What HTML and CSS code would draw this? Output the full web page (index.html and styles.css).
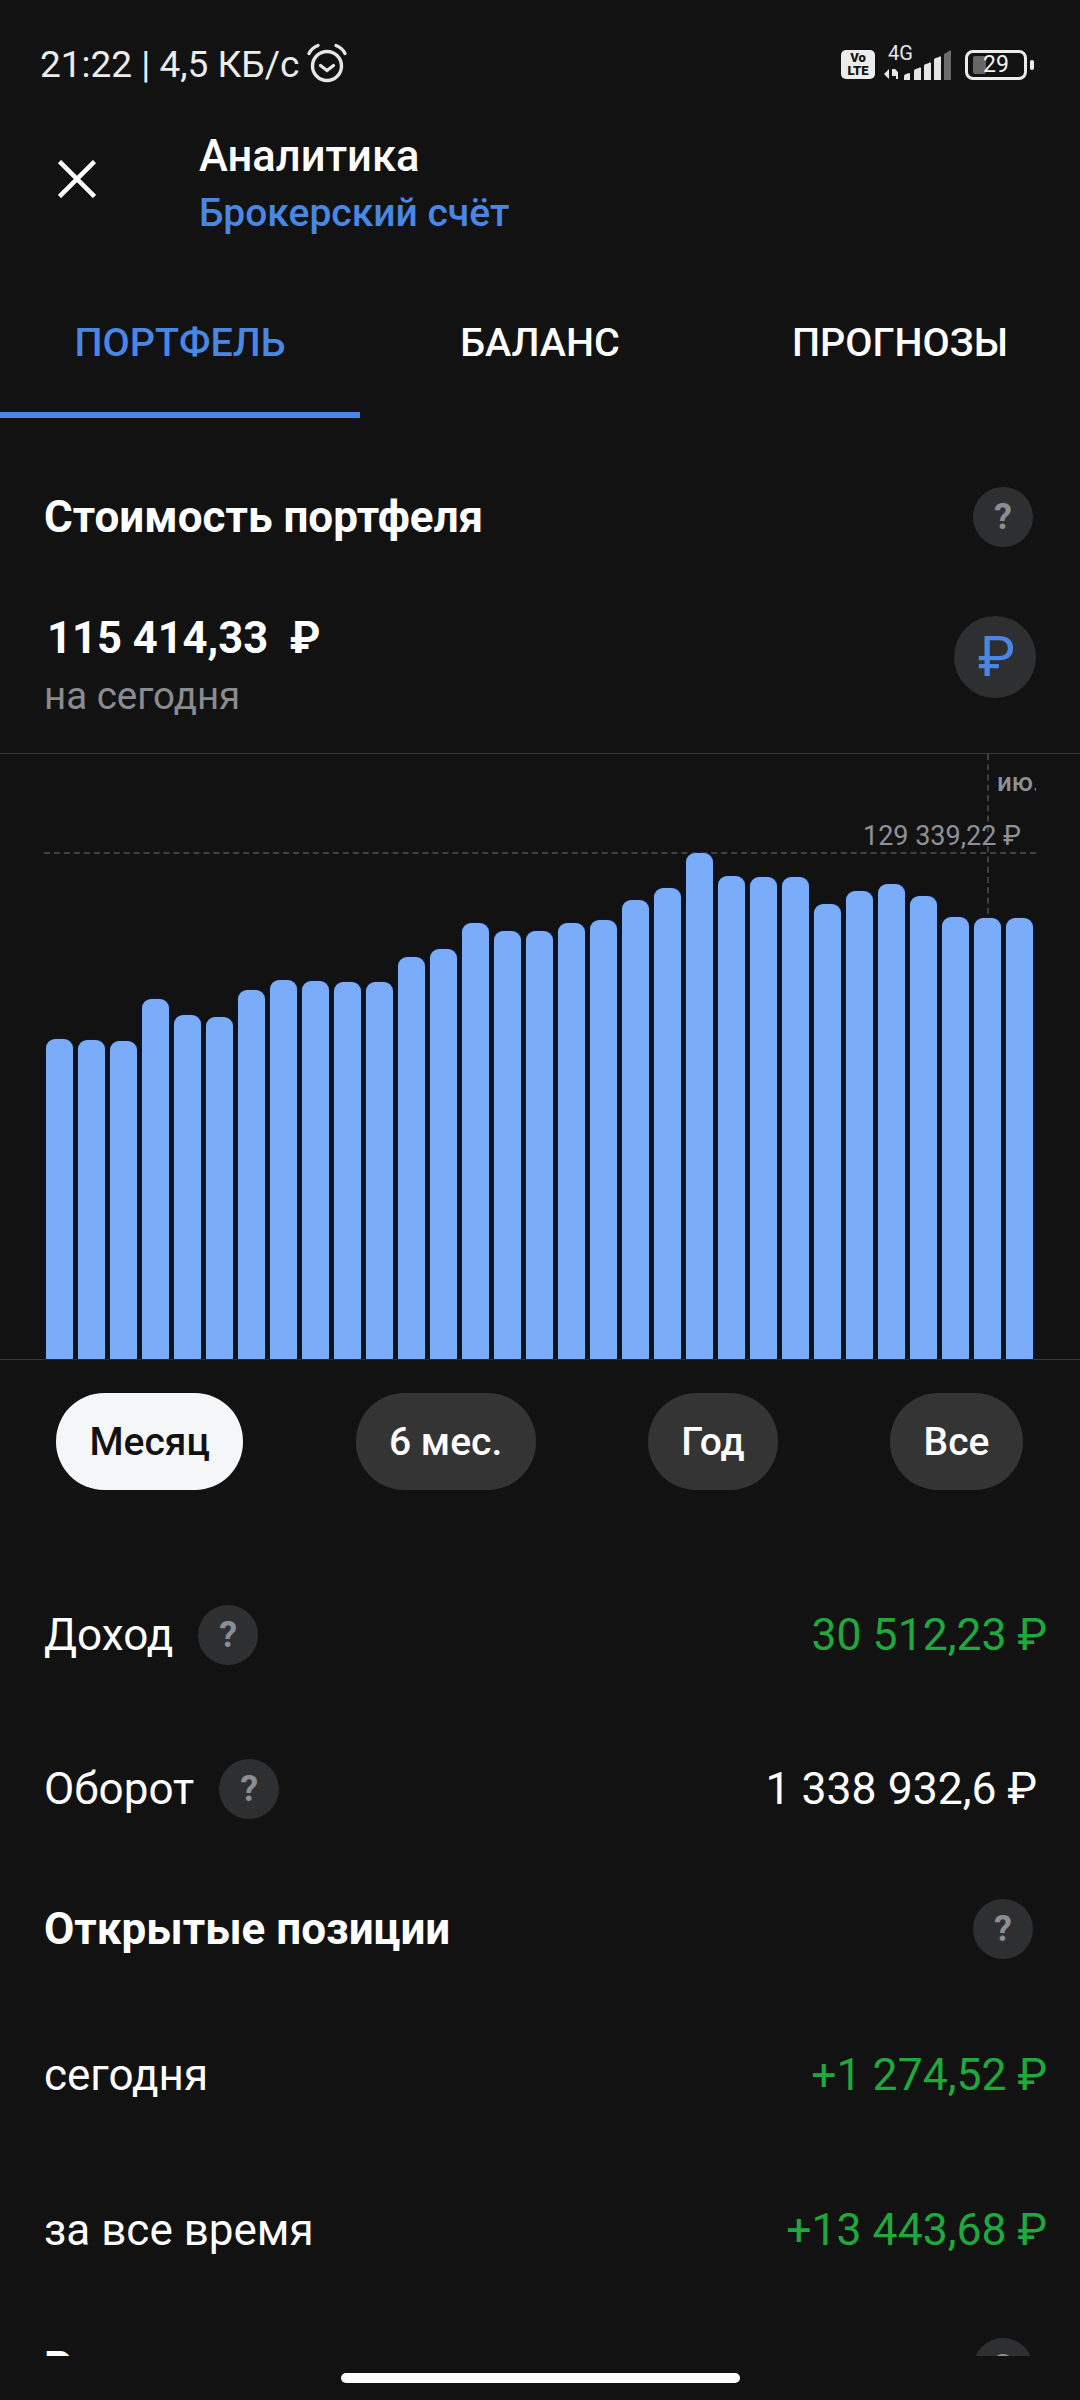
FILE: index.html
```html
<!DOCTYPE html>
<html lang="ru">
<head>
<meta charset="utf-8">
<title>Аналитика</title>
<link rel="stylesheet" href="styles.css">
</head>
<body>
<div class="screen">
  <div class="content">
    <div class="status">
      <div class="status-left">
        <span>21:22 | 4,5 КБ/с</span>
        <svg class="alarm" width="44" height="42" viewBox="0 0 44 42" fill="none" stroke="#e6e6e6" stroke-linecap="round">
          <circle cx="21" cy="23" r="14.5" stroke-width="3.4"/>
          <path d="M14.5 22.5l6.5 5 6.5-5" stroke-width="3.2"/>
          <path d="M3 10.5C5 6.5 8 4 12 2.500M39 10.500C37 6.500 34 4 30 2.500" stroke-width="3.4"/>
        </svg>
      </div>
      <div class="status-right">
        <div class="volte"><span>Vo</span><span>LTE</span></div>
        <div class="signal">
          <span class="net">4G</span>
          <svg width="68" height="30" viewBox="0 0 68 30">
            <path d="M0 24l5-5v10zM8 19h3l3 3v7h-2v-3H8z" fill="#e6e6e6"/>
            <path d="M20 26a3 3 0 0 1 2-2l3-1a1 1 0 0 1 1 1v6h-6zM30 21a2 2 0 0 1 2-2l3-1a1 1 0 0 1 2 1v11h-7zM40 16a2 2 0 0 1 2-2l3-1a1 1 0 0 1 2 1v16h-7zM50 10a2 2 0 0 1 2-2l3-1a1 1 0 0 1 2 1v22h-7z" fill="#e6e6e6"/>
            <path d="M60 5a2 2 0 0 1 2-2l3-2a1 1 0 0 1 2 1v28h-7z" fill="#6d6d6d"/>
          </svg>
        </div>
        <div class="battery"><i class="battery-fill"></i><span class="battery-num">29</span></div>
        <i class="battery-nub"></i>
      </div>
    </div>

    <header class="head">
      <svg class="close" width="38" height="38" viewBox="0 0 38 38" fill="none" stroke="#fff" stroke-width="4.500">
        <path d="M1.500 1.500l35 35M36.500 1.500l-35 35"/>
      </svg>
      <div class="titles">
        <div class="title">Аналитика</div>
        <div class="subtitle">Брокерский счёт</div>
      </div>
    </header>

    <nav class="tabs">
      <div class="tab tab-active">ПОРТФЕЛЬ</div>
      <div class="tab">БАЛАНС</div>
      <div class="tab">ПРОГНОЗЫ</div>
    </nav>

    <div class="section-head value-head">
      <h2>Стоимость портфеля</h2>
      <span class="help">?</span>
    </div>

    <div class="amount-row">
      <div>
        <div class="amount">115 414,33&nbsp; ₽</div>
        <div class="amount-sub">на сегодня</div>
      </div>
      <div class="currency">₽</div>
    </div>

    <div class="chart">
      <i class="guide-h"></i>
      <i class="guide-v"></i>
      <span class="chart-month">ию.</span>
      <span class="chart-max">129 339,22 ₽</span>
      <div class="bars">
        <i class="bar" style="height:320px"></i><i class="bar" style="height:319px"></i><i class="bar" style="height:318px"></i><i class="bar" style="height:360px"></i><i class="bar" style="height:344px"></i><i class="bar" style="height:342px"></i><i class="bar" style="height:369px"></i><i class="bar" style="height:379px"></i><i class="bar" style="height:378px"></i><i class="bar" style="height:377px"></i><i class="bar" style="height:377px"></i><i class="bar" style="height:402px"></i><i class="bar" style="height:410px"></i><i class="bar" style="height:436px"></i><i class="bar" style="height:428px"></i><i class="bar" style="height:428px"></i><i class="bar" style="height:436px"></i><i class="bar" style="height:439px"></i><i class="bar" style="height:459px"></i><i class="bar" style="height:471px"></i><i class="bar" style="height:506px"></i><i class="bar" style="height:483px"></i><i class="bar" style="height:482px"></i><i class="bar" style="height:482px"></i><i class="bar" style="height:455px"></i><i class="bar" style="height:468px"></i><i class="bar" style="height:475px"></i><i class="bar" style="height:463px"></i><i class="bar" style="height:442px"></i><i class="bar" style="height:441px"></i><i class="bar" style="height:441px"></i>
      </div>
    </div>

    <div class="pills">
      <div class="pill pill-active">Месяц</div>
      <div class="pill">6 мес.</div>
      <div class="pill">Год</div>
      <div class="pill">Все</div>
    </div>

    <div class="row row-income">
      <div class="row-label"><span>Доход</span><span class="help">?</span></div>
      <div class="row-value green">30 512,23 ₽</div>
    </div>
    <div class="row row-turnover">
      <div class="row-label"><span>Оборот</span><span class="help">?</span></div>
      <div class="row-value inset">1 338 932,6 ₽</div>
    </div>

    <div class="section-head positions-head">
      <h2>Открытые позиции</h2>
      <span class="help">?</span>
    </div>

    <div class="row row-today">
      <div class="row-label"><span>сегодня</span></div>
      <div class="row-value green">+1 274,52 ₽</div>
    </div>
    <div class="row row-all">
      <div class="row-label"><span>за все время</span></div>
      <div class="row-value green">+13 443,68 ₽</div>
    </div>
    <div class="section-head last-head">
      <h2>Реализованные</h2>
      <span class="help">?</span>
    </div>
  </div>
  <div class="home"><i class="home-bar"></i></div>
</div>
</body>
</html>
```

FILE: styles.css
```css
* { box-sizing: border-box; }
html, body { margin: 0; padding: 0; background: #121213; }
body { font-family: Roboto, "Liberation Sans", sans-serif; color: #fff; }
.screen { width: 1080px; height: 2400px; display: flex; flex-direction: column; overflow: hidden; }
.content { height: 2356px; overflow: hidden; flex: none; }

.status { height: 130px; padding: 44px 46px 0 40px; display: flex; justify-content: space-between; align-items: flex-start; }
.status-left { display: flex; align-items: flex-start; font-size: 37px; line-height: 42px; color: #ececec; }
.alarm { margin: -1px 0 0 7px; }
.status-right { display: flex; align-items: flex-start; padding-top: 6px; }
.volte { width: 34px; height: 29px; border-radius: 5px; background: #ececec; color: #121213; display: flex; flex-direction: column; align-items: center; font-size: 13px; line-height: 13px; font-weight: 900; padding-top: 1px; margin-right: 9px; }
.signal { width: 68px; height: 33px; position: relative; margin-top: -1px; margin-right: 13px; }
.signal svg { position: absolute; left: 0; top: 1px; }
.net { position: absolute; left: 4px; top: -6px; font-size: 20px; line-height: 20px; color: #e6e6e6; z-index: 1; }
.battery { width: 62px; height: 30px; border: 3px solid #ececec; border-radius: 8px; position: relative; display: flex; align-items: center; justify-content: center; }
.battery-fill { position: absolute; left: 5px; top: 3px; width: 13px; height: 18px; background: #666; border-radius: 2px; }
.battery-num { position: relative; font-size: 23px; line-height: 24px; color: #f2f2f2; }
.battery-nub { width: 4px; height: 10px; background: #ececec; border-radius: 2px; margin: 10px 0 0 3px; }

.head { height: 106px; display: flex; align-items: center; padding-left: 58px; }
.close { margin: -8px 103px 0 0; flex: none; }
.title { font-size: 43.5px; line-height: 50px; font-weight: 500; }
.subtitle { font-size: 39px; line-height: 44px; font-weight: 500; color: #4a86e4; margin-top: 9px; }

.tabs { display: flex; margin-top: 36px; }
.tab { width: 360px; height: 146px; display: flex; align-items: center; justify-content: center; font-size: 39.5px; font-weight: 500; border-bottom: 6px solid transparent; }
.tab-active { color: #4a86e4; border-bottom-color: #4a86e4; }

.section-head { display: flex; justify-content: space-between; align-items: center; height: 60px; padding: 0 47px 0 44px; }
.section-head h2 { margin: 0; font-size: 44px; line-height: 50px; font-weight: 700; }
.value-head { margin-top: 69px; }
.positions-head { margin-top: 81px; }
.last-head { margin-top: 78px; }
.help { width: 60px; height: 60px; border-radius: 50%; background: #2e2f30; color: #8b8d94; display: flex; align-items: center; justify-content: center; font-size: 36px; font-weight: 700; flex: none; }

.amount-row { display: flex; justify-content: space-between; padding: 0 44px; margin-top: 65px; height: 141px; }
.amount { font-size: 43.5px; line-height: 46px; font-weight: 700; padding: 4px 0 0 3px; }
.amount-sub { font-size: 38.5px; line-height: 44px; color: #8a8c92; margin-top: 12px; }
.currency { width: 82px; height: 82px; border-radius: 50%; background: #2e2f30; color: #4a86e4; display: flex; align-items: center; justify-content: center; font-size: 56px; font-weight: 400; margin-top: 4px; padding-left: 3px; }

.chart { height: 607px; border-top: 1px solid #37383a; border-bottom: 1px solid #37383a; position: relative; }
.guide-h { position: absolute; left: 44px; right: 44px; top: 98px; border-top: 2px dashed #3f4042; }
.guide-v { position: absolute; left: 987px; top: 0; height: 170px; border-left: 2px dashed #3f4042; }
.chart-month { position: absolute; left: 997px; width: 39px; top: 12px; font-size: 26px; line-height: 32px; font-weight: 500; color: #8f9197; overflow: hidden; white-space: nowrap; }
.chart-max { position: absolute; right: 59px; top: 66px; font-size: 27px; line-height: 32px; color: #8f9197; }
.bars { position: absolute; left: 46px; bottom: 0; display: flex; align-items: flex-end; gap: 5px; }
.bar { width: 27px; border-radius: 9px 9px 0 0; background: #7bacfa; box-shadow: 0 0 2px 1px rgba(5, 30, 70, .6); }

.pills { display: flex; justify-content: space-between; padding: 0 57px 0 56px; margin-top: 33px; }
.pill { height: 97px; border-radius: 48px; background: #343435; display: flex; align-items: center; justify-content: center; font-size: 39px; font-weight: 500; padding: 0 33.5px; }
.pill-active { background: #f5f6f8; color: #121213; }

.row { display: flex; justify-content: space-between; align-items: center; height: 60px; padding: 0 33px 0 44px; font-size: 44px; }
.row-label { display: flex; align-items: center; gap: 25px; }
.row-value { line-height: 50px; font-size: 44.5px; }
.green { color: #1fa93d; }
.inset { padding-right: 10px; }
.row-income { margin-top: 114px; padding-top: 2px; }
.row-turnover { margin-top: 94px; padding-top: 2px; }
.row-today { margin-top: 86px; }
.row-all { margin-top: 95px; }

.home { flex: none; height: 44px; display: flex; justify-content: center; padding-top: 17px; }
.home-bar { width: 399px; height: 10px; background: #fff; border-radius: 5px; }
```
